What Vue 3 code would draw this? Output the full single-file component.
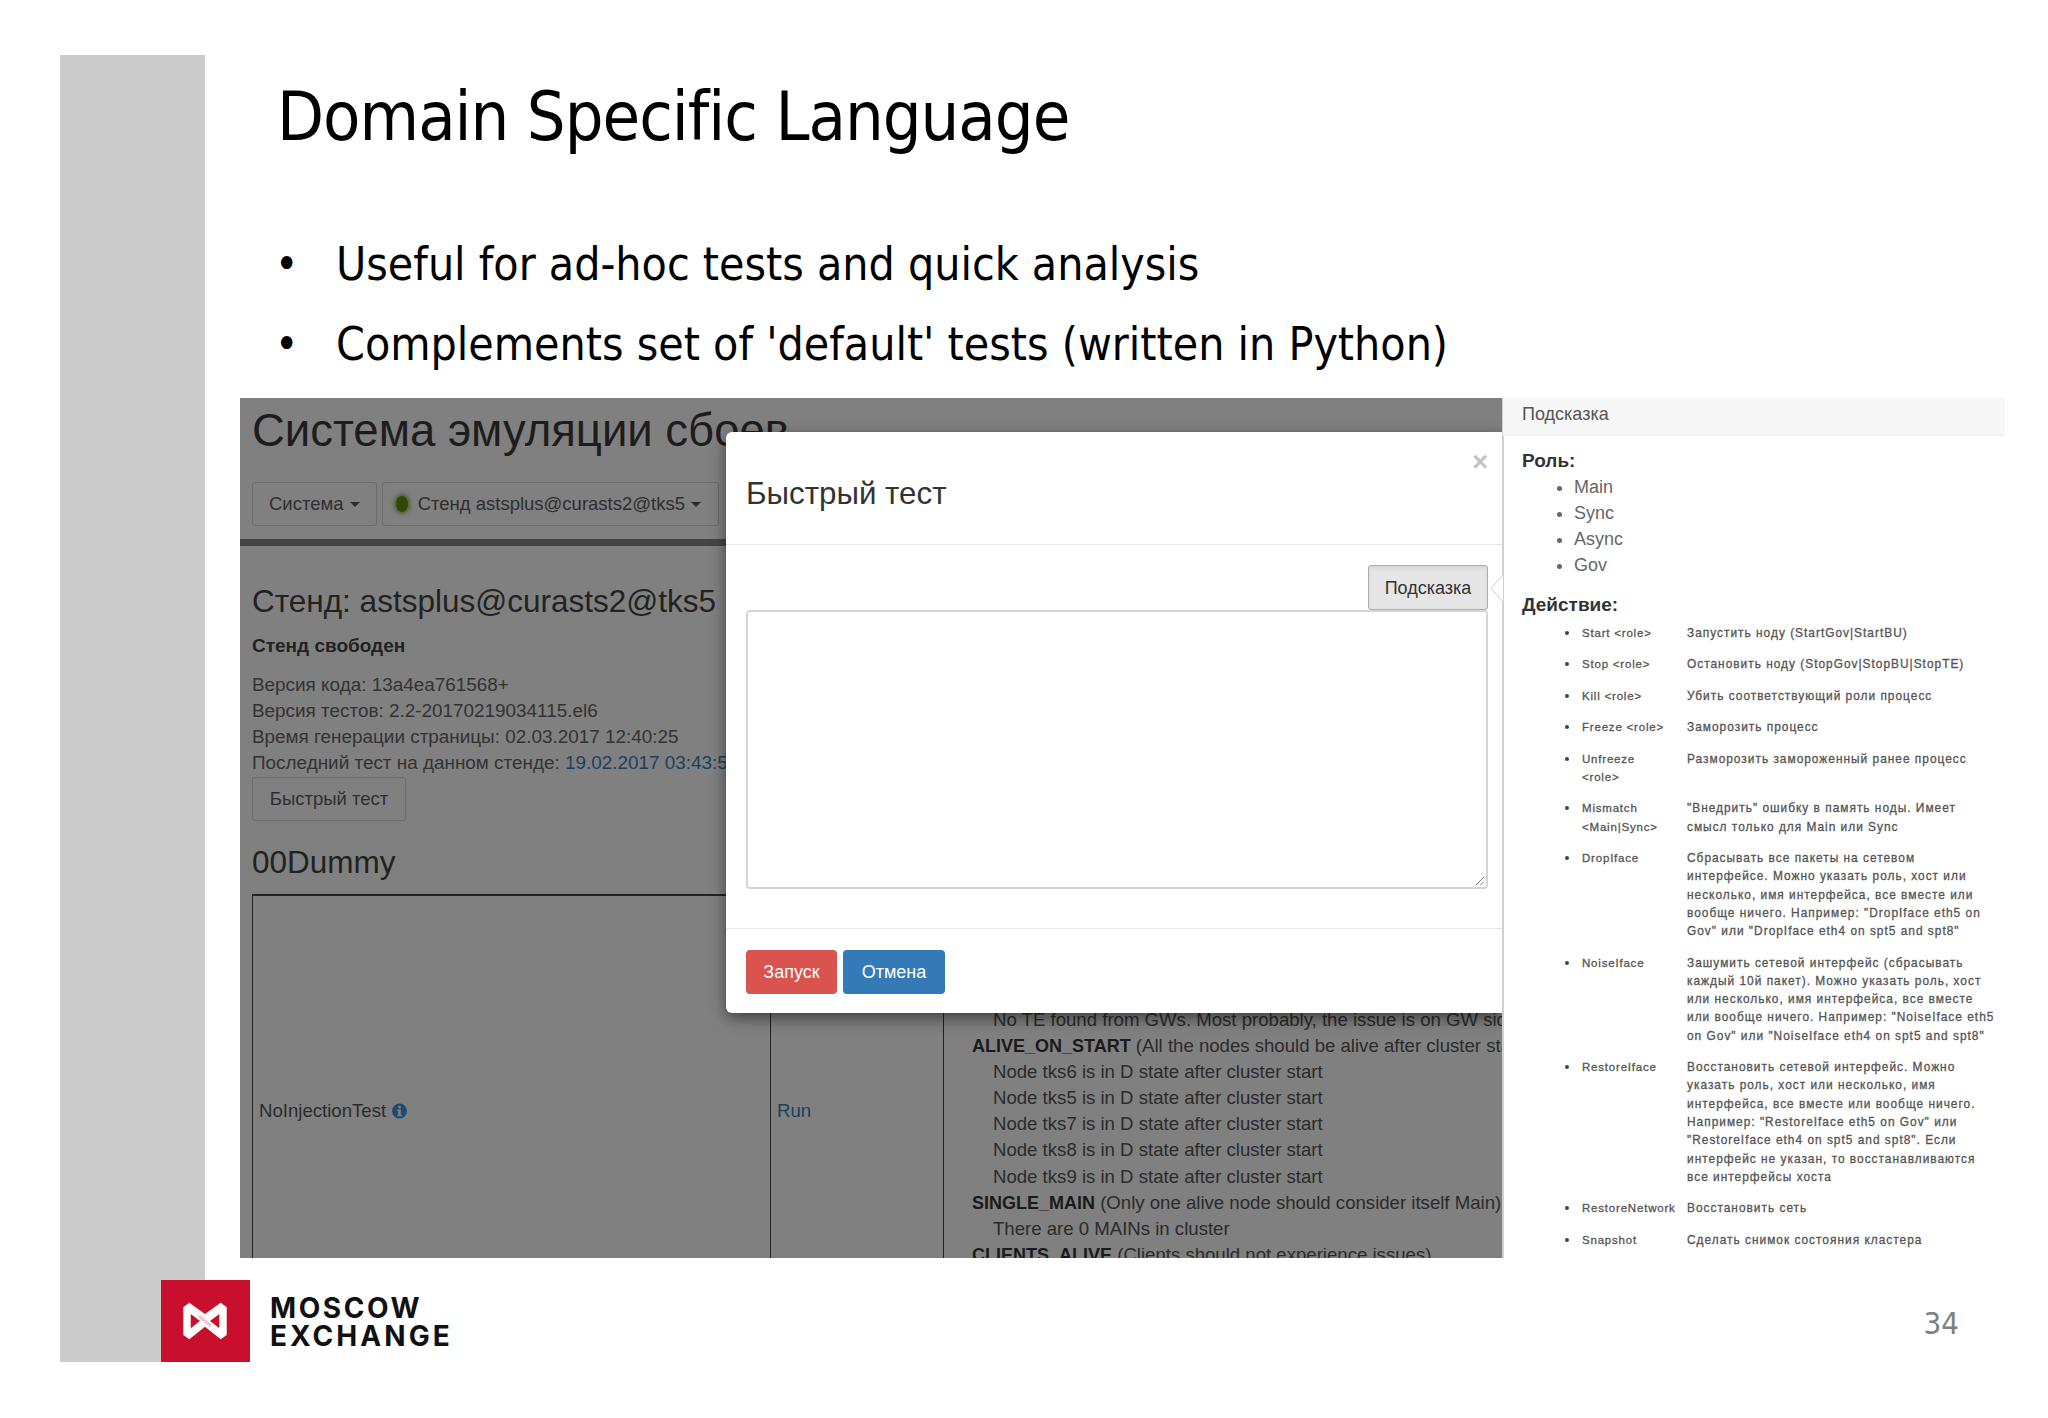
<script setup>
const versions = [
  { label: 'Версия кода:', value: '13a4ea761568+' },
  { label: 'Версия тестов:', value: '2.2-20170219034115.el6' },
  { label: 'Время генерации страницы:', value: '02.03.2017 12:40:25' }
]
const checks = [
  { text: 'No TE found from GWs. Most probably, the issue is on GW side', indent: true },
  { bold: 'ALIVE_ON_START', text: ' (All the nodes should be alive after cluster start)' },
  { text: 'Node tks6 is in D state after cluster start', indent: true },
  { text: 'Node tks5 is in D state after cluster start', indent: true },
  { text: 'Node tks7 is in D state after cluster start', indent: true },
  { text: 'Node tks8 is in D state after cluster start', indent: true },
  { text: 'Node tks9 is in D state after cluster start', indent: true },
  { bold: 'SINGLE_MAIN', text: ' (Only one alive node should consider itself Main)' },
  { text: 'There are 0 MAINs in cluster', indent: true },
  { bold: 'CLIENTS_ALIVE', text: ' (Clients should not experience issues)' }
]
const roles = ['Main', 'Sync', 'Async', 'Gov']
const actions = [
  { name: ['Start <role>'], desc: ['Запустить ноду (StartGov|StartBU)'] },
  { name: ['Stop <role>'], desc: ['Остановить ноду (StopGov|StopBU|StopTE)'] },
  { name: ['Kill <role>'], desc: ['Убить соответствующий роли процесс'] },
  { name: ['Freeze <role>'], desc: ['Заморозить процесс'] },
  { name: ['Unfreeze', '<role>'], desc: ['Разморозить замороженный ранее процесс'] },
  { name: ['Mismatch', '<Main|Sync>'], desc: ['"Внедрить" ошибку в память ноды. Имеет', 'смысл только для Main или Sync'] },
  { name: ['DropIface'], desc: ['Сбрасывать все пакеты на сетевом', 'интерфейсе. Можно указать роль, хост или', 'несколько, имя интерфейса, все вместе или', 'вообще ничего. Например: "DropIface eth5 on', 'Gov" или "DropIface eth4 on spt5 and spt8"'] },
  { name: ['NoiseIface'], desc: ['Зашумить сетевой интерфейс (сбрасывать', 'каждый 10й пакет). Можно указать роль, хост', 'или несколько, имя интерфейса, все вместе', 'или вообще ничего. Например: "NoiseIface eth5', 'on Gov" или "NoiseIface eth4 on spt5 and spt8"'] },
  { name: ['RestoreIface'], desc: ['Восстановить сетевой интерфейс. Можно', 'указать роль, хост или несколько, имя', 'интерфейса, все вместе или вообще ничего.', 'Например: "RestoreIface eth5 on Gov" или', '"RestoreIface eth4 on spt5 and spt8". Если', 'интерфейс не указан, то восстанавливаются', 'все интерфейсы хоста'] },
  { name: ['RestoreNetwork'], desc: ['Восстановить сеть'] },
  { name: ['Snapshot'], desc: ['Сделать снимок состояния кластера'] }
]
</script>

<template>
  <div class="page">
    <aside class="band"></aside>

    <main class="main">
      <h1 class="title">Domain Specific Language</h1>
      <ul class="points">
        <li>Useful for ad-hoc tests and quick analysis</li>
        <li>Complements set of 'default' tests (written in Python)</li>
      </ul>

      <section class="figure">
        <div class="shot">
          <h2 class="app-title">Система эмуляции сбоев</h2>
          <nav class="nav">
            <span class="btn">Система <i class="caret"></i></span>
            <span class="btn stand-btn"><i class="led"></i>Стенд astsplus@curasts2@tks5 <i class="caret"></i></span>
          </nav>
          <div class="content">
            <h3 class="h3 stand">Стенд: astsplus@curasts2@tks5</h3>
            <p class="free">Стенд свободен</p>
            <p v-for="v in versions" :key="v.label" class="info">{{ v.label }} {{ v.value }}</p>
            <p class="info">Последний тест на данном стенде: <span class="link">19.02.2017 03:43:51</span></p>
            <span class="btn quick">Быстрый тест</span>
            <h3 class="h3 dummy">00Dummy</h3>
            <div class="table">
              <div class="cell name">
                NoInjectionTest
                <svg class="info-icon" viewBox="0 0 16 16" width="15" height="16">
                  <circle cx="8" cy="8" r="8" fill="#1d4a75" />
                  <rect x="6.600" y="2.600" width="2.800" height="2.600" fill="#808080" />
                  <path d="M5.600 6.400h3.800v5.600h1.200v1.600H5.600V12h1V8H5.600z" fill="#808080" />
                </svg>
              </div>
              <div class="cell run"><span class="link">Run</span></div>
              <div class="cell checks">
                <p v-for="(c, i) in checks" :key="i" :class="{ indent: c.indent }"><b v-if="c.bold">{{ c.bold }}</b>{{ c.text }}</p>
              </div>
            </div>
          </div>

          <div class="modal">
            <header class="modal-head">
              <h4 class="modal-title">Быстрый тест</h4>
              <span class="close">×</span>
            </header>
            <div class="modal-body">
              <div class="hint-row"><span class="hint-btn">Подсказка</span></div>
              <div class="area">
                <svg class="grip" viewBox="0 0 10 10" width="10" height="10">
                  <path d="M1 9 9 1M5.500 9 9 5.500" stroke="#777" stroke-width="1" fill="none" />
                </svg>
              </div>
            </div>
            <footer class="modal-foot">
              <span class="act red">Запуск</span>
              <span class="act blue">Отмена</span>
            </footer>
          </div>
        </div>

        <div class="pop">
          <svg class="arrow" viewBox="0 0 13 28" width="13" height="28">
            <path d="M13 0 1 13.500 13 27" fill="#fff" stroke="#ccc" stroke-width="1" />
          </svg>
          <div class="pop-head">Подсказка</div>
          <div class="pop-body">
            <h5 class="pop-h">Роль:</h5>
            <ul class="roles"><li v-for="r in roles" :key="r">{{ r }}</li></ul>
            <h5 class="pop-h second">Действие:</h5>
            <div v-for="a in actions" :key="a.name[0]" class="action">
              <div class="a-name"><span v-for="l in a.name" :key="l">{{ l }}</span></div>
              <div class="a-desc"><span v-for="l in a.desc" :key="l">{{ l }}</span></div>
            </div>
          </div>
        </div>
      </section>

      <footer class="foot"><span class="num">34</span></footer>
    </main>

    <div class="brand">
      <div class="mark">
        <svg viewBox="0 0 89 82" width="89" height="82">
          <path d="M22.300 27.300 28.300 22.700 44 34 59.700 22.700 65.700 27.300V55L59.700 59.300 44 46.700 28.300 59.300 22.300 55Z" fill="#fff" />
          <path d="M29.700 34V48.300L39 41ZM58.300 34V48.300L49 41Z" fill="#c8102e" />
          <path d="M38 36 50 46" stroke="#eeb4c0" stroke-width="3" opacity=".75" />
        </svg>
      </div>
      <div class="word"><span class="w1">MOSCOW</span><span class="w2">EXCHANGE</span></div>
    </div>
  </div>
</template>

<style>
html, body { margin: 0; background: #fff; }
</style>

<style scoped>
.page {
  position: relative;
  width: 2048px;
  height: 1418px;
  overflow: hidden;
  background: #fff;
  display: flex;
  font-family: "Liberation Sans", Arial, sans-serif;
}
.band {
  width: 145px;
  height: 1307px;
  margin: 55px 0 0 60px;
  background: #cbcbcb;
  flex: none;
}
.main { flex: 1; padding: 77px 0 0 35px; min-width: 0; }
.title {
  margin: 0 0 67px 37px;
  font: 400 68px/80px "DejaVu Sans Condensed", "DejaVu Sans", sans-serif;
  letter-spacing: -1px;
  color: #000;
}
.points {
  margin: 0 0 14px;
  padding: 0 0 0 35px;
  list-style: none;
  font: 400 46px/80px "DejaVu Sans Condensed", "DejaVu Sans", sans-serif;
  color: #000;
}
.points li { display: flex; white-space: nowrap; }
.points li::before { content: "•"; width: 61px; flex: none; font-size: 44px; }
.figure { display: flex; height: 860px; }
.shot {
  position: relative;
  width: 1263px;
  flex: none;
  overflow: hidden;
  background: #808080;
  color: #2b2b2b;
}
.app-title {
  margin: 8px 0 0 12px;
  font-size: 45.500px;
  line-height: 50px;
  font-weight: 400;
  color: #1d1d1d;
}
.nav {
  display: flex;
  gap: 5px;
  padding: 26px 0 13px 12px;
  border-bottom: 7px solid #454545;
}
.btn {
  display: inline-flex;
  align-items: center;
  height: 44px;
  box-sizing: border-box;
  padding: 0 16px;
  border: 1px solid #6c6c6c;
  border-radius: 3px;
  font-size: 18.500px;
  color: #2f2f2f;
  white-space: pre;
}
.stand-btn { padding-right: 17px; }
.caret {
  display: inline-block;
  width: 0;
  height: 0;
  margin-left: 1px;
  border-top: 5px solid #2b2b2b;
  border-left: 5px solid transparent;
  border-right: 5px solid transparent;
}
.led {
  width: 12px;
  height: 16px;
  margin: 0 10px 0 -3px;
  border-radius: 50%;
  background: #2f4a08;
  box-shadow: 0 0 4px 2px #4b5c2e;
}
.content { padding: 35px 0 0 12px; }
.h3 { margin: 0; font-size: 31.500px; line-height: 40px; font-weight: 400; color: #222; }
.free { margin: 12px 0 13px; font-size: 19px; line-height: 26px; font-weight: 700; color: #222; }
.info { margin: 0; font-size: 18.900px; line-height: 26px; color: #333; white-space: nowrap; }
.link { color: #1b3f60; }
.quick { margin-top: 1px; width: 154px; justify-content: center; padding: 0; }
.dummy { margin-top: 21px; }
.table {
  display: grid;
  grid-template-columns: 518px 173px 1fr;
  height: 430px;
  margin-top: 12px;
  border-top: 2px solid #222;
  border-left: 1px solid #222;
}
.cell { border-right: 1px solid #222; box-sizing: border-box; font-size: 18.600px; color: #2b2b2b; }
.name, .run { display: flex; align-items: center; padding-left: 6px; gap: 4px; }
.info-icon { margin-left: 2px; }
.checks { border-right: 0; padding: 111px 0 0 28px; line-height: 26.100px; white-space: nowrap; }
.checks p { margin: 0; }
.checks b { color: #1a1a1a; font-size: 18px; }
.checks .indent { padding-left: 21px; }
.modal {
  position: absolute;
  left: 486px;
  right: 0;
  top: 34px;
  height: 581px;
  background: #fff;
  border-radius: 6px 0 0 6px;
  box-shadow: 0 5px 15px rgba(0, 0, 0, .5);
  display: flex;
  flex-direction: column;
}
.modal-head {
  display: flex;
  justify-content: space-between;
  align-items: flex-start;
  height: 113px;
  box-sizing: border-box;
  padding: 16px 15px 0 20px;
  border-bottom: 1px solid #e5e5e5;
}
.modal-title { margin: 29px 0 0; font-size: 31.300px; line-height: 34px; font-weight: 400; color: #333; }
.close { font-size: 27px; line-height: 28px; font-weight: 700; color: #c4c4c4; }
.modal-body { padding: 20px 15px 0 20px; height: 384px; flex: none; box-sizing: border-box; border-bottom: 1px solid #e5e5e5; }
.hint-row { display: flex; justify-content: flex-end; }
.hint-btn {
  display: flex;
  align-items: center;
  justify-content: center;
  width: 120px;
  height: 45px;
  padding-top: 1px;
  box-sizing: border-box;
  border: 1px solid #adadad;
  border-radius: 3px;
  background: #e6e6e6;
  box-shadow: inset 0 2px 4px rgba(0, 0, 0, .08);
  font-size: 18px;
  color: #333;
}
.area {
  position: relative;
  height: 279px;
  box-sizing: border-box;
  border: 2px solid #d5d5d5;
  border-radius: 4px;
}
.grip { position: absolute; right: 1px; bottom: 1px; }
.modal-foot { display: flex; gap: 6px; padding: 21px 20px 0; }
.act {
  display: flex;
  align-items: center;
  justify-content: center;
  height: 44px;
  border-radius: 4px;
  font-size: 18px;
  color: #fff;
}
.red { width: 91px; background: #d9534f; }
.blue { width: 102px; background: #337ab7; }
.pop {
  position: relative;
  width: 503px;
  flex: none;
  background: #fff;
  border-left: 2px solid #d0d0d0;
  box-sizing: border-box;
  margin-left: -1px;
}
.arrow { position: absolute; left: -14px; top: 177px; }
.pop-head {
  height: 38px;
  margin-left: -1px;
  padding-left: 19px;
  box-sizing: border-box;
  background: #f7f7f7;
  border-bottom: 1px solid #efefef;
  font-size: 18px;
  line-height: 33px;
  color: #555;
}
.pop-body { padding: 12px 0 0 18px; }
.pop-h { margin: 0; font-size: 19px; line-height: 26px; font-weight: 700; color: #333; }
.second { margin: 14px 0 6px; }
.roles { margin: 0; padding: 0 0 0 52px; font-size: 18px; line-height: 26px; color: #666; }
.action { display: flex; margin: 0 0 13.100px 60px; font-size: 11.900px; line-height: 18.300px; letter-spacing: 1px; color: #555; position: relative; white-space: nowrap; -webkit-text-stroke: .3px #555; }
.action::before { content: ""; position: absolute; left: -17px; top: 7px; width: 4px; height: 4px; border-radius: 50%; background: #444; }
.a-name { width: 105px; flex: none; display: flex; flex-direction: column; letter-spacing: .8px; font-size: 11.500px; }
.a-desc { display: flex; flex-direction: column; }
.foot { display: flex; justify-content: flex-end; padding: 46px 89px 0 0; }
.num { font: 400 31px/38px "DejaVu Sans Condensed", "DejaVu Sans", sans-serif; color: #808080; }
.brand {
  position: absolute;
  left: 161px;
  top: 1280px;
  display: flex;
  align-items: center;
  gap: 20px;
}
.mark { width: 89px; height: 82px; background: #c8102e; }
.mark svg { display: block; }
.word { font: 700 28px/28px Inter, "DejaVu Sans", sans-serif; color: #111; padding-top: 2px; }
.w1, .w2 { display: block; }
.w1 { letter-spacing: 2.600px; }
.w2 { letter-spacing: 3.100px; }
</style>
